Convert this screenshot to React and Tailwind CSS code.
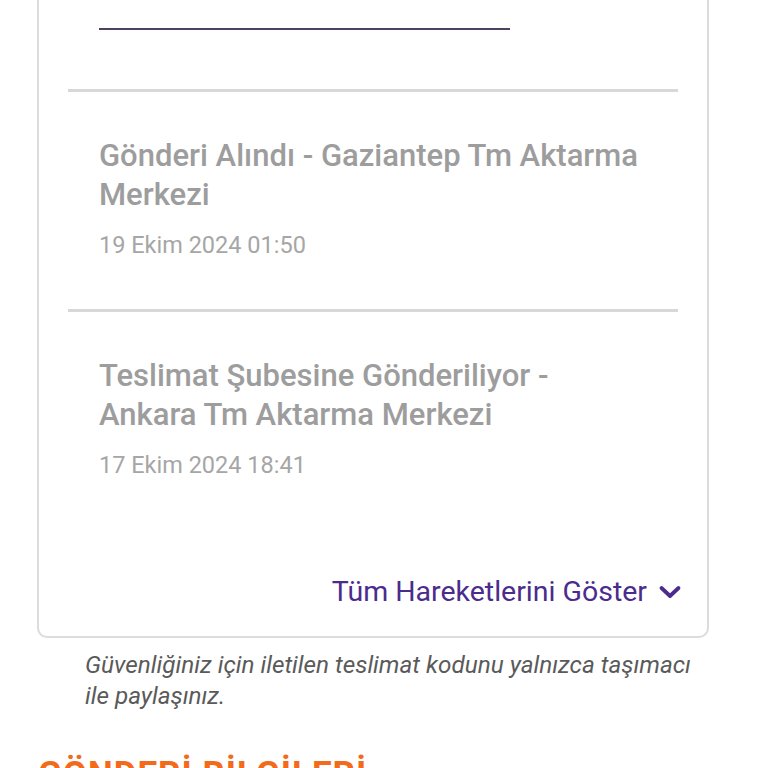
import React from 'react';

const events = [
  {
    id: 'gaziantep',
    title: 'Gönderi Alındı - Gaziantep Tm Aktarma Merkezi',
    date: '19 Ekim 2024 01:50',
  },
  {
    id: 'ankara',
    title: 'Teslimat Şubesine Gönderiliyor - Ankara Tm Aktarma Merkezi',
    date: '17 Ekim 2024 18:41',
  },
];

function ChevronDown() {
  return (
    <svg width="24" height="24" viewBox="0 0 24 24" fill="none" className="shrink-0">
      <path
        d="M3.5 8 L12 16 L20.5 8"
        stroke="#4b2c8c"
        strokeWidth="3.8"
        strokeLinecap="round"
        strokeLinejoin="round"
      />
    </svg>
  );
}

export default function App() {
  return (
    <div
      className="w-[768px] h-[768px] overflow-hidden bg-white"
      style={{ fontFamily: 'Roboto, "Noto Sans", Arial, sans-serif' }}
    >
      {/* tracking card, top cut off */}
      <div className="ml-[37px] w-[672px] -mt-[22px] border-2 border-[#dcdcdc] rounded-b-[10px] px-[29px] pb-[26px]">
        <div className="pt-[48px] pl-[31px]">
          <div className="h-[2px] w-[411px] bg-[#4d4260]" />
        </div>

        <div className="mt-[59px]">
          {events.map((ev) => (
            <div key={ev.id}>
              <div className="h-[3px] bg-[#d8d8d8]" />
              <div className="px-[31px] pt-[44px] pb-[49px]">
                <div className="text-[31px] leading-[39px] font-medium text-[#9d9d9d]">
                  {ev.title}
                </div>
                <div className="mt-[16px] text-[23.5px] leading-[30px] text-[#a6a6a6]">
                  {ev.date}
                </div>
              </div>
            </div>
          ))}
        </div>

        <div className="mt-[45px] flex items-center justify-end gap-[11px] mr-[-4px]">
          <span className="text-[28.5px] leading-[36px] text-[#4b2c8c]">
            Tüm Hareketlerini Göster
          </span>
          <ChevronDown />
        </div>
      </div>

      <p className="ml-[85px] w-[620px] mt-[11px] text-[24.3px] leading-[31px] italic text-[#5a5a5a]">
        Güvenliğiniz için iletilen teslimat kodunu yalnızca taşımacı ile paylaşınız.
      </p>

      <h2 className="ml-[38px] mt-[44px] text-[35px] leading-[40px] font-bold text-[#f26a1b] tracking-[1px]">
        GÖNDERİ BİLGİLERİ
      </h2>
    </div>
  );
}
